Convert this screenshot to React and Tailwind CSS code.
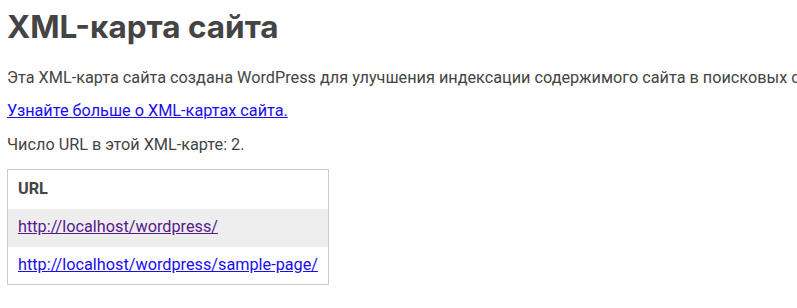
import React from "react";

const urls = [
  { loc: "http://localhost/wordpress/", visited: true },
  { loc: "http://localhost/wordpress/sample-page/", visited: false },
];

const App = () => {
  return (
    <div className="w-[797px] h-[308px] overflow-hidden bg-white px-[7px] text-[#444] font-['Roboto','Liberation_Sans',sans-serif] text-[16.25px] whitespace-nowrap">
      <h1 className="font-['Inter','Roboto',sans-serif] text-[31.5px] font-bold leading-[38px] pt-[8px] text-[#444]">
        XML-карта сайта
      </h1>

      <p className="leading-[20px] mt-[22px]">
        Эта XML-карта сайта создана WordPress для улучшения индексации
        содержимого сайта в поисковых системах.
      </p>

      <p className="leading-[20px] mt-[13px]">
        <a href="#" className="text-[#1a0dee] underline">
          Узнайте больше о XML-картах сайта.
        </a>
      </p>

      <p className="leading-[20px] mt-[14px]">
        Число URL в этой XML-карте: 2.
      </p>

      <table className="mt-[14px] border border-[#ccc] border-collapse w-[320px]">
        <thead>
          <tr>
            <th className="text-left font-bold px-[10px] h-[39px]">URL</th>
          </tr>
        </thead>
        <tbody>
          {urls.map((u, i) => (
            <tr key={i} className={i % 2 === 0 ? "bg-[#eee]" : ""}>
              <td className="px-[10px] h-[38px]">
                <a
                  href="#"
                  className={
                    u.visited
                      ? "text-[#551a8b] underline"
                      : "text-[#1a0dee] underline"
                  }
                >
                  {u.loc}
                </a>
              </td>
            </tr>
          ))}
        </tbody>
      </table>
    </div>
  );
};

export default App;
